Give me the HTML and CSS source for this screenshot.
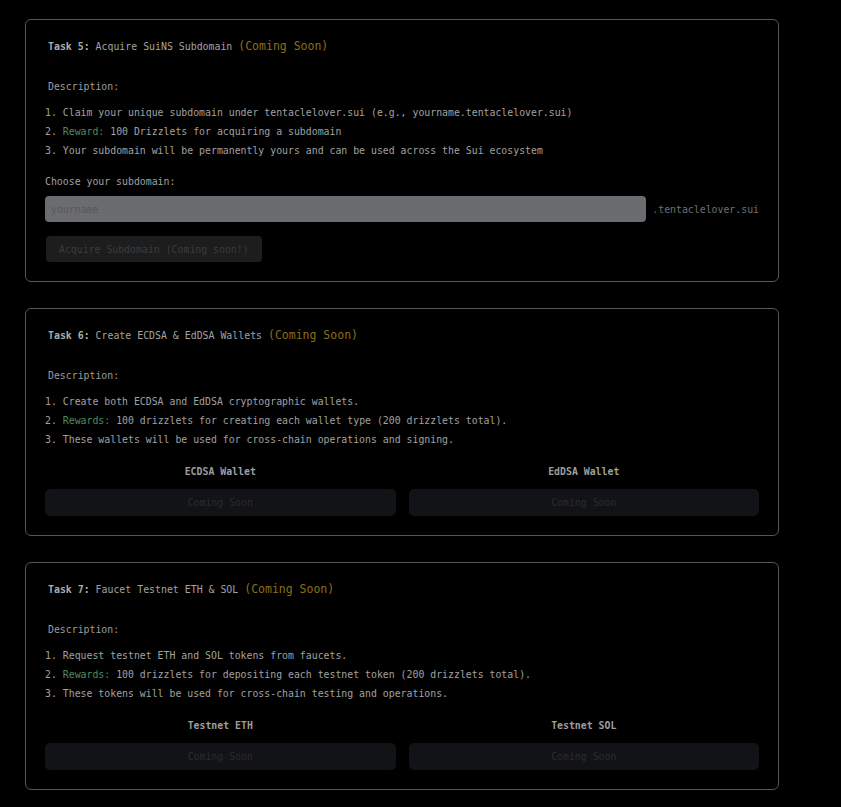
FILE: index.html
```html
<!DOCTYPE html>
<html lang="en">
<head>
    <meta charset="UTF-8">
    <meta name="viewport" content="width=device-width, initial-scale=1.0">
    <title>Tasks</title>
    <link rel="stylesheet" href="styles.css">
</head>
<body>
    <div class="tasks">
        <!-- Task 5 -->
        <div class="task-card">
            <h3 class="task-title"><strong>Task 5:</strong> Acquire SuiNS Subdomain <span class="soon">(Coming Soon)</span></h3>
            <p class="task-desc">Description:</p>
            <ol class="task-list">
                <li>Claim your unique subdomain under tentaclelover.sui (e.g., yourname.tentaclelover.sui)</li>
                <li><span class="reward">Reward:</span> 100 Drizzlets for acquiring a subdomain</li>
                <li>Your subdomain will be permanently yours and can be used across the Sui ecosystem</li>
            </ol>
            <label class="field-label" for="subdomain">Choose your subdomain:</label>
            <div class="input-row">
                <input type="text" id="subdomain" placeholder="yourname" disabled>
                <span class="suffix">.tentaclelover.sui</span>
            </div>
            <button class="acquire-button" disabled>Acquire Subdomain (Coming soon!)</button>
        </div>

        <!-- Task 6 -->
        <div class="task-card">
            <h3 class="task-title"><strong>Task 6:</strong> Create ECDSA &amp; EdDSA Wallets <span class="soon">(Coming Soon)</span></h3>
            <p class="task-desc">Description:</p>
            <ol class="task-list">
                <li>Create both ECDSA and EdDSA cryptographic wallets.</li>
                <li><span class="reward">Rewards:</span> 100 drizzlets for creating each wallet type (200 drizzlets total).</li>
                <li>These wallets will be used for cross-chain operations and signing.</li>
            </ol>
            <div class="option-grid">
                <div class="option">
                    <div class="option-label">ECDSA Wallet</div>
                    <button class="soon-button" disabled>Coming Soon</button>
                </div>
                <div class="option">
                    <div class="option-label">EdDSA Wallet</div>
                    <button class="soon-button" disabled>Coming Soon</button>
                </div>
            </div>
        </div>

        <!-- Task 7 -->
        <div class="task-card">
            <h3 class="task-title"><strong>Task 7:</strong> Faucet Testnet ETH &amp; SOL <span class="soon">(Coming Soon)</span></h3>
            <p class="task-desc">Description:</p>
            <ol class="task-list">
                <li>Request testnet ETH and SOL tokens from faucets.</li>
                <li><span class="reward">Rewards:</span> 100 drizzlets for depositing each testnet token (200 drizzlets total).</li>
                <li>These tokens will be used for cross-chain testing and operations.</li>
            </ol>
            <div class="option-grid">
                <div class="option">
                    <div class="option-label">Testnet ETH</div>
                    <button class="soon-button" disabled>Coming Soon</button>
                </div>
                <div class="option">
                    <div class="option-label">Testnet SOL</div>
                    <button class="soon-button" disabled>Coming Soon</button>
                </div>
            </div>
        </div>
    </div>
</body>
</html>
```

FILE: styles.css
```css
/* General Styles */
* {
    margin: 0;
    padding: 0;
    box-sizing: border-box;
    font-family: 'DejaVu Sans Mono', 'Liberation Mono', monospace;
}

body {
    background-color: #000;
    color: #a0a0a0;
    font-size: 9.85px;
    padding: 19px 0 0 25px;
}

.tasks {
    width: 754px;
    display: flex;
    flex-direction: column;
    gap: 26px;
}

/* Task Card */
.task-card {
    border: 1px solid #55565b;
    border-radius: 6px;
    padding: 18px 19px 19px 19px;
}

.task-title {
    font-size: 9.9px;
    font-weight: normal;
    line-height: 16px;
    padding-left: 3px;
    color: #a3a3a3;
}

.task-title strong {
    color: #adadad;
}

.soon {
    font-size: 11.5px;
    color: #8c6e17;
}

.task-desc {
    line-height: 16px;
    margin-top: 24px;
    padding-left: 3px;
    color: #9c9c9c;
}

.task-list {
    list-style: none;
    counter-reset: step;
    margin-top: 8px;
}

.task-list li {
    line-height: 19px;
    counter-increment: step;
}

.task-list li::before {
    content: counter(step) ". ";
}

.reward {
    color: #4f8a62;
}

/* Subdomain Form */
.field-label {
    display: block;
    line-height: 16px;
    margin-top: 14px;
}

.input-row {
    display: flex;
    align-items: center;
    gap: 6px;
    margin-top: 6px;
}

.input-row input {
    flex: 1;
    height: 26px;
    border: none;
    border-radius: 4px;
    background-color: #6b6c70;
    padding: 0 6px;
    font-size: 9.85px;
    color: #555;
}

.input-row input::placeholder {
    color: #56575b;
}

.suffix {
    color: #6f7073;
}

.acquire-button {
    display: block;
    margin-top: 14px;
    margin-left: 1px;
    height: 26px;
    padding: 0 13px;
    border: none;
    border-radius: 4px;
    background-color: #1d1d1d;
    color: #3c3c3c;
    font-size: 9.85px;
}

/* Wallet / Faucet Options */
.option-grid {
    display: grid;
    grid-template-columns: 1fr 1fr;
    gap: 13px;
    margin-top: 15px;
}

.option-label {
    text-align: center;
    font-weight: bold;
    line-height: 16px;
    color: #9e9e9e;
}

.soon-button {
    display: block;
    width: 100%;
    height: 27px;
    margin-top: 9px;
    border: none;
    border-radius: 5px;
    background-color: #121316;
    color: #2b2c30;
    font-size: 9.85px;
}
```
